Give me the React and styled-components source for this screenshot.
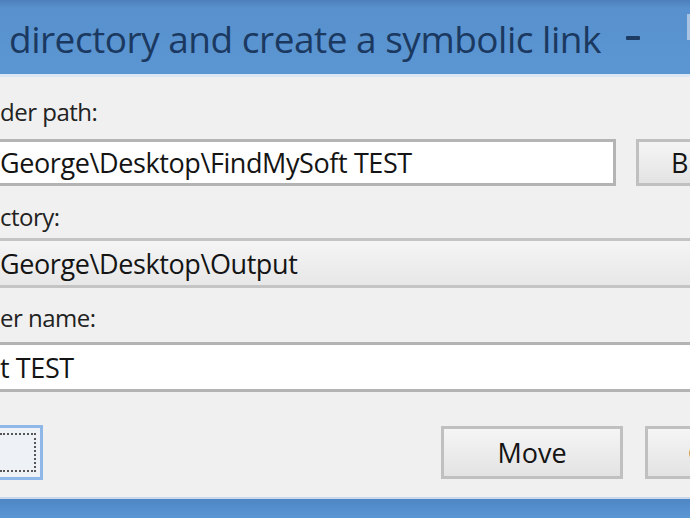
import React from "react";
import styled, { createGlobalStyle } from "styled-components";

const Global = createGlobalStyle`
  html, body { margin: 0; padding: 0; overflow: hidden; background: #f0f0f0; }
  #root { width: 690px; height: 518px; }
`;

const Window = styled.div`
  width: 690px;
  height: 518px;
  display: flex;
  flex-direction: column;
  font-family: "Open Sans", "Noto Sans", sans-serif;
  overflow: hidden;
`;

const TitleBar = styled.div`
  height: 74px;
  flex: none;
  display: flex;
  align-items: center;
  padding-left: 9px;
  background: linear-gradient(#4d7fbb 0px, #5891cd 8px, #5b96d3 100%);
  border-bottom: 3px solid #dbe7f3;
  position: relative;
`;

const Title = styled.div`
  color: #1b3960;
  font-size: 37px;
  letter-spacing: -0.5px;
  white-space: nowrap;
  margin-top: 2px;
`;

const Minimize = styled.div`
  position: absolute;
  left: 626px;
  top: 36px;
  width: 14px;
  height: 4px;
  background: #1d3b63;
  border-radius: 1px;
`;

const CloseEdge = styled.div`
  position: absolute;
  right: 0;
  top: 14px;
  width: 3px;
  height: 26px;
  background: #a9c4e3;
`;

const Body = styled.div`
  flex: 1;
  min-height: 0;
  overflow: hidden;
  background: #f0f0f0;
  display: flex;
  flex-direction: column;
  padding-top: 20px;
`;

const Label = styled.div`
  font-size: 24px;
  color: #222;
  height: 30px;
  line-height: 30px;
  letter-spacing: -0.5px;
  margin-bottom: ${(p) => p.$mb}px;
  white-space: nowrap;
  flex: none;
`;

const Row = styled.div`
  display: flex;
  align-items: stretch;
  gap: 20px;
  flex: none;
  margin-bottom: ${(p) => p.$mb}px;
`;

const Field = styled.div`
  height: ${(p) => p.$h}px;
  box-sizing: border-box;
  width: ${(p) => (p.$w ? p.$w + "px" : "100%")};
  flex: ${(p) => (p.$w ? "none" : "1")};
  background: ${(p) => (p.$readonly ? "linear-gradient(#f5f5f5, #e7e7e7)" : "#ffffff")};
  border: 3px solid ${(p) => (p.$readonly ? "#c4c4c4" : "#b4b4b4")};
  border-left: none;
  ${(p) => (p.$openRight ? "border-right: none;" : "")}
  display: flex;
  align-items: center;
  font-size: 27px;
  color: #141414;
  letter-spacing: -0.4px;
  white-space: nowrap;
  overflow: hidden;
`;

const Button = styled.div`
  box-sizing: border-box;
  height: ${(p) => p.$h}px;
  width: ${(p) => p.$w}px;
  flex: none;
  margin-left: ${(p) => p.$ml || 0}px;
  border: 3px solid #c0c0c0;
  background: linear-gradient(#f5f5f5, #e3e3e3);
  display: flex;
  align-items: center;
  justify-content: ${(p) => (p.$pl ? "flex-start" : "center")};
  padding-left: ${(p) => p.$pl || 0}px;
  font-size: 27px;
  color: #141414;
  overflow: hidden;
  white-space: nowrap;
`;

const Footer = styled.div`
  display: flex;
  align-items: center;
  flex: none;
  margin-top: 33px;
`;

const FocusBox = styled.div`
  box-sizing: border-box;
  flex: none;
  width: 43px;
  height: 55px;
  border: 3px solid #8fb8e8;
  border-left: none;
  background: #eef2f7;
  display: flex;
  align-items: center;
  justify-content: flex-end;
  padding: 5px 4px 5px 0;
`;

const Dotted = styled.div`
  width: 100%;
  height: 100%;
  border: 2px dotted #555;
  border-left: none;
  box-sizing: border-box;
`;

const BottomBar = styled.div`
  height: 21px;
  flex: none;
  box-sizing: border-box;
  background: linear-gradient(#4f86c4, #5b97d4);
  border-top: 2px solid #c9d9ea;
`;

export default function App() {
  return (
    <Window>
      <Global />
      <TitleBar>
        <Title>directory and create a symbolic link</Title>
        <Minimize />
        <CloseEdge />
      </TitleBar>
      <Body>
        <Label $mb={12}>der path:</Label>
        <Row $mb={16}>
          <Field $w={616} $h={47}>George\Desktop\FindMySoft TEST</Field>
          <Button $w={60} $h={47} $pl={32}>Br</Button>
        </Row>
        <Label $mb={6}>ctory:</Label>
        <Row $mb={15}>
          <Field $h={50} $readonly $openRight>George\Desktop\Output</Field>
        </Row>
        <Label $mb={9}>er name:</Label>
        <Row $mb={0}>
          <Field $h={50} $openRight>t TEST</Field>
        </Row>
        <Footer>
          <FocusBox>
            <Dotted />
          </FocusBox>
          <Button $w={182} $h={53} $ml={398}>Move</Button>
          <Button $w={60} $h={53} $ml={22} $pl={40}>C</Button>
        </Footer>
      </Body>
      <BottomBar />
    </Window>
  );
}
